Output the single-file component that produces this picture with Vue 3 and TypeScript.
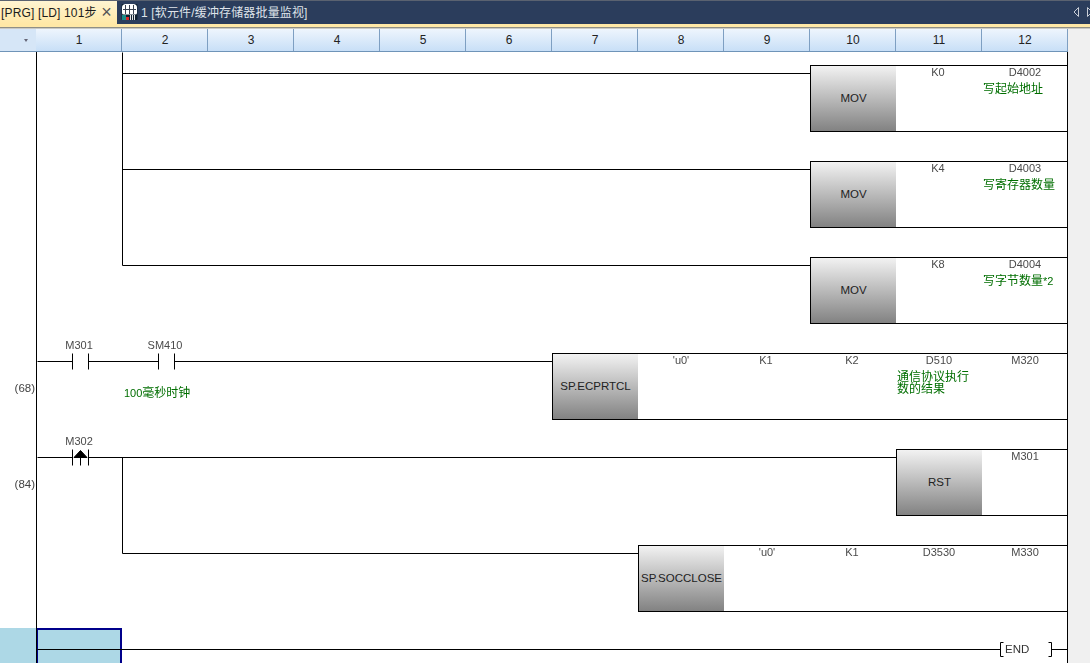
<script setup lang="ts">
interface Box { x: number; y: number; name: string }
interface Label { x: number; y: number; w: number; t: string }
const cols = Array.from({ length: 12 }, (_, i) => i + 1)
const boxes: Box[] = [
  { x: 810, y: 65, name: 'MOV' },
  { x: 810, y: 161, name: 'MOV' },
  { x: 810, y: 257, name: 'MOV' },
  { x: 552, y: 353, name: 'SP.ECPRTCL' },
  { x: 896, y: 449, name: 'RST' },
  { x: 638, y: 545, name: 'SP.SOCCLOSE' }
]
const hw = [
  'M122 52V265', 'M122 73H810', 'M122 169H810', 'M122 265H810',
  'M37 361H72', 'M88 361H158', 'M174 361H552',
  'M37 457H72', 'M88 457H896', 'M122 457V553', 'M122 553H638',
  'M37 649H1000', 'M1051 649H1067'
]
const labels: Label[] = [
  { x: 895, y: 65, w: 86, t: 'K0' }, { x: 982, y: 65, w: 86, t: 'D4002' },
  { x: 895, y: 161, w: 86, t: 'K4' }, { x: 982, y: 161, w: 86, t: 'D4003' },
  { x: 895, y: 257, w: 86, t: 'K8' }, { x: 982, y: 257, w: 86, t: 'D4004' },
  { x: 36, y: 338, w: 86, t: 'M301' }, { x: 122, y: 338, w: 86, t: 'SM410' },
  { x: 638, y: 353, w: 86, t: "'u0'" }, { x: 723, y: 353, w: 86, t: 'K1' },
  { x: 809, y: 353, w: 86, t: 'K2' }, { x: 896, y: 353, w: 86, t: 'D510' },
  { x: 982, y: 353, w: 86, t: 'M320' },
  { x: 36, y: 434, w: 86, t: 'M302' }, { x: 982, y: 449, w: 86, t: 'M301' },
  { x: 724, y: 545, w: 86, t: "'u0'" }, { x: 809, y: 545, w: 86, t: 'K1' },
  { x: 896, y: 545, w: 86, t: 'D3530' }, { x: 982, y: 545, w: 86, t: 'M330' }
]
const comments: Label[] = [
  { x: 983, y: 82, w: 80, t: '写起始地址' },
  { x: 983, y: 178, w: 80, t: '写寄存器数量' },
  { x: 983, y: 274, w: 84, t: '写字节数量*2' },
  { x: 124, y: 386, w: 80, t: '100毫秒时钟' },
  { x: 897, y: 370, w: 80, t: '通信协议执行' },
  { x: 897, y: 382, w: 80, t: '数的结果' }
]
const parts = (t: string) => t.split(/([*0-9]+)/).filter(Boolean).map((s) => ({ s, latin: /^[*0-9]/.test(s) }))
const pos = (l: { x: number; y: number; w: number }) => ({ left: l.x + 'px', top: l.y + 'px', width: l.w + 'px' })
const boxPos = (b: Box) => ({ left: b.x + 'px', top: b.y + 'px', width: 1068 - b.x + 'px' })
</script>

<template>
  <div class="app">
    <div class="tabs">
      <div class="tab active">
        <span>[PRG] [LD] 101步</span><span class="close">×</span>
      </div>
      <div class="tab other">
        <svg class="tabicon" width="17" height="18" viewBox="0 0 17 18">
          <rect x="0.5" y="1" width="16" height="16" rx="1" fill="#0f2030" />
          <path d="M1 4.5Q1 1 5 1H12Q16 1 16 4.5V10Q16 11.5 14 11.5H3Q1 11.5 1 10Z" fill="#fff" />
          <path d="M4.5 2V11M8.5 2V11M12.5 2V11M2 6.5H15" stroke="#3a4250" stroke-width="1" />
          <path d="M1 12H5V17H1Z" fill="#1b8a86" />
          <path d="M5 14H8V17H5Z" fill="#d8262a" />
          <path d="M9 12H10V17H9ZM11 12H12V17H11ZM13 12H14V17H13Z" fill="#e8e8e8" />
        </svg>
        <span>1 [软元件/缓冲存储器批量监视]</span>
      </div>
      <div class="spacer"></div>
      <svg class="nav" width="17" height="12" viewBox="0 0 17 12">
        <path d="M5.5 1.5L1 6L5.5 10.5Z" fill="none" stroke="#c8cdd6" />
        <path d="M14.5 1.5L19 6L14.5 10.5Z" fill="none" stroke="#c8cdd6" />
      </svg>
    </div>
    <div class="gold"></div>
    <div class="body">
      <div class="main">
        <div class="ruler">
          <div class="corner"><i></i></div>
          <div v-for="c in cols" :key="c" class="col">{{ c }}</div>
        </div>
        <div class="canvas">
          <div class="sel-side"></div>
          <div class="sel"></div>
          <div v-for="(b, i) in boxes" :key="i" class="fb" :style="boxPos(b)">
            <div class="fbname">{{ b.name }}</div>
          </div>
          <svg class="wires" width="1068" height="611" viewBox="0 52 1068 611">
            <path d="M36.5 52V663M1067.5 52V663" stroke="#000" fill="none" />
            <path v-for="d in hw" :key="d" :d="d" transform="translate(0.5 0.5)" stroke="#000" fill="none" />
            <g transform="translate(0.5 0.5)" stroke="#000" fill="none">
              <path d="M72 353V369M88 353V369M158 353V369M174 353V369" />
              <path d="M72 449V465M88 449V465M80 453V465" />
              <path d="M73.5 457L80 450L86.5 457Z" fill="#000" />
              <path d="M1003 642H1000V656H1003M1048 642H1051V656H1048" />
            </g>
          </svg>
          <div class="texts">
            <span v-for="(l, i) in labels" :key="'l' + i" class="dev" :style="pos(l)">{{ l.t }}</span>
            <span class="step s1">(68)</span>
            <span class="step s2">(84)</span>
          </div>
          <span v-for="(l, i) in comments" :key="'c' + i" class="cmt" :style="pos(l)"><span
            v-for="(p, j) in parts(l.t)" :key="j" :class="{ latin: p.latin }">{{ p.s }}</span></span>
          <span class="end">END</span>
        </div>
      </div>
      <div class="gutter"></div>
    </div>
  </div>
</template>

<style>
html, body { margin: 0; background: #fff; overflow: hidden; }
</style>

<style scoped>
.app {
  width: 1090px;
  height: 663px;
  display: flex;
  flex-direction: column;
  overflow: hidden;
  font-family: "Liberation Sans", "Noto Sans CJK SC", sans-serif;
}
.tabs {
  height: 24px;
  flex: none;
  display: flex;
  align-items: stretch;
  background: #2b3d5c;
  color: #dfe3ea;
  font-size: 12px;
  letter-spacing: 0.15px;
  border-top: 1px solid #5a6270;
  box-sizing: border-box;
}
.tab { display: flex; align-items: center; white-space: nowrap; padding-bottom: 2px; box-sizing: border-box; }
.tab.active {
  width: 117px;
  background: linear-gradient(#fff4d2, #ffe8a6);
  color: #1b1b1b;
  justify-content: space-between;
  padding-left: 1px;
  padding-right: 5px;
}
.close { font-size: 18px; line-height: 1; color: #555; }
.tab.other { padding-left: 4px; gap: 3px; }
.tabicon { flex: none; }
.spacer { flex: 1; }
.nav { align-self: center; margin-bottom: 1px; }
.gold { height: 5px; flex: none; background: linear-gradient(#ffe8a6 0 3px, #8f8f86 3px 4px, #c9c9c4 4px); }
.body { flex: 1; display: flex; min-height: 0; }
.main { width: 1068px; display: flex; flex-direction: column; }
.gutter { flex: 1; background: #f0f0f0; }
.ruler {
  height: 23px;
  flex: none;
  display: grid;
  grid-template-columns: 36px repeat(12, 86px);
  background: linear-gradient(#eef5fd, #c8dff7);
  border-bottom: 1px solid #6f94b8;
  box-sizing: border-box;
  font-size: 12px;
  color: #222;
}
.corner {
  background: #d6e6f7;
  display: flex;
  align-items: center;
  justify-content: center;
  padding-left: 16px;
  box-sizing: border-box;
}
.corner i {
  width: 0;
  height: 0;
  border-left: 2.5px solid transparent;
  border-right: 2.5px solid transparent;
  border-top: 3px solid #667;
}
.col {
  display: flex;
  align-items: center;
  justify-content: center;
  border-right: 1px solid #7e9fc2;
  box-sizing: border-box;
  padding-left: 1px;
}
.canvas { position: relative; flex: 1; background: #fff; overflow: hidden; }
.wires { position: absolute; left: 0; top: 0; }
.texts { position: absolute; inset: 0; will-change: transform; }
.sel-side { position: absolute; left: 0; top: 576px; width: 37px; height: 35px; background: #add8e6; }
.sel {
  position: absolute;
  left: 36px;
  top: 576px;
  width: 86px;
  height: 40px;
  box-sizing: border-box;
  background: #add8e6;
  border: 2px solid #00008b;
}
.fb {
  position: absolute;
  margin-top: -52px;
  height: 67px;
  box-sizing: border-box;
  border-top: 1px solid #000;
  border-bottom: 1px solid #000;
  border-left: 1px solid #000;
}
.fbname {
  width: 85px;
  height: 100%;
  padding-bottom: 2px;
  box-sizing: border-box;
  background: linear-gradient(#f2f2f2, #828282);
  display: flex;
  align-items: center;
  justify-content: center;
  font-size: 11.5px;
  color: #222;
  white-space: nowrap;
}
.dev {
  position: absolute;
  margin-top: -52px;
  text-align: center;
  font-size: 11px;
  line-height: 14px;
  color: #4a4a4a;
  white-space: nowrap;
}
.cmt {
  position: absolute;
  margin-top: -52px;
  font-size: 12px;
  line-height: 14px;
  color: #006e00;
  white-space: nowrap;
}
.latin { font-size: 11px; }
.step { position: absolute; font-size: 11.5px; line-height: 14px; color: #444; right: 1033px; }
.s1 { top: 329px; }
.s2 { top: 425px; }
.end { position: absolute; left: 1005px; top: 590px; font-size: 11.5px; line-height: 14px; color: #333; }
</style>
